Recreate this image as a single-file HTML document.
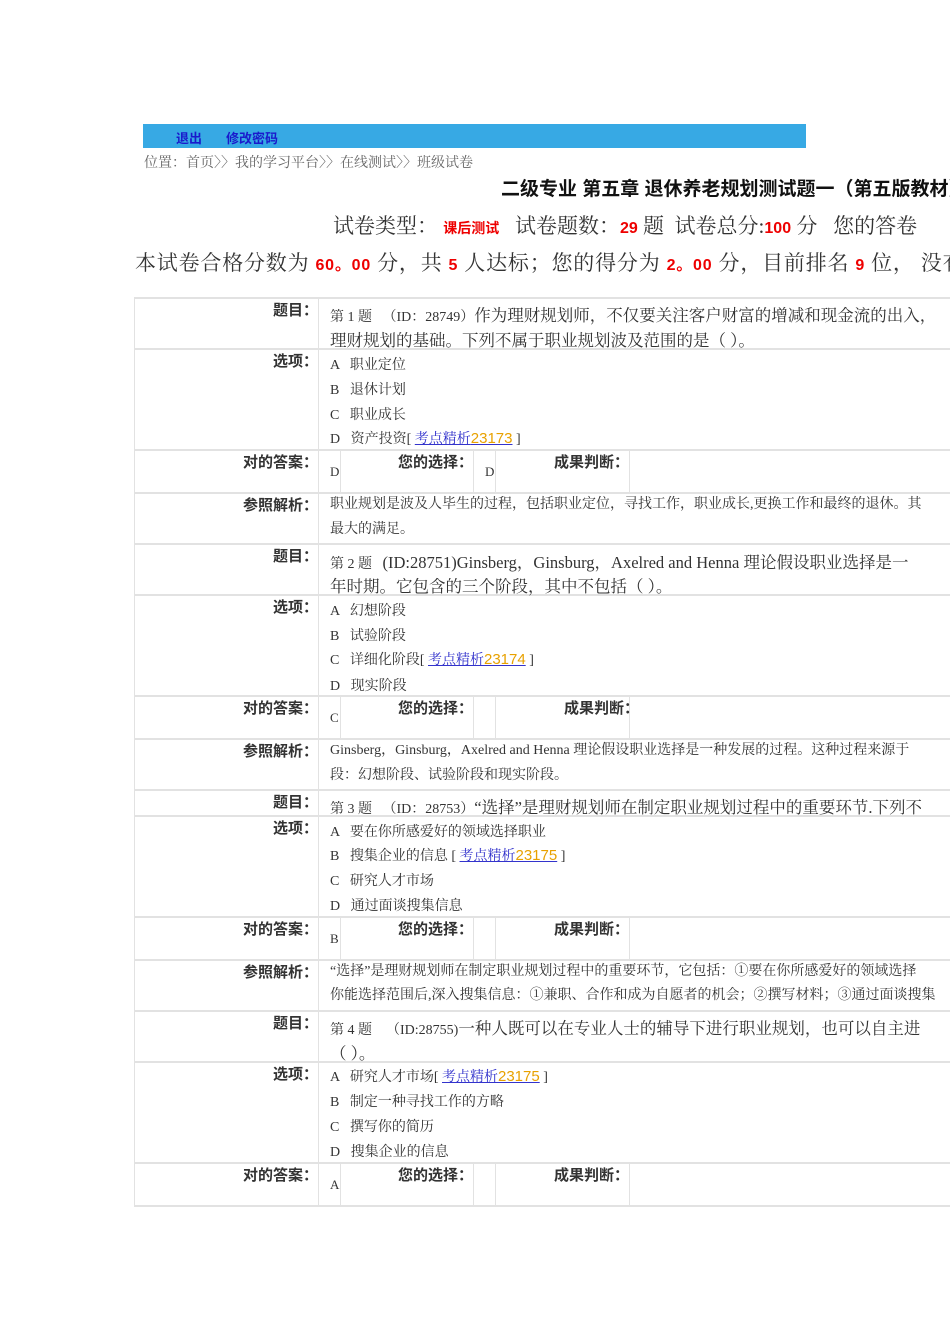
<!DOCTYPE html>
<html><head><meta charset="utf-8"><style>
*{margin:0;padding:0}
body{width:950px;height:1344px;background:#fff;position:relative;overflow:hidden;font-family:"Liberation Serif","Noto Serif CJK SC",serif;color:#222}
.a{position:absolute;white-space:nowrap}
.h{position:absolute;left:134px;width:816px;height:2px;background:#e2e2e2}
.v{position:absolute;width:1px;background:#e2e2e2}
.lb{position:absolute;right:632px;font:bold 15px "Liberation Sans","Noto Sans CJK SC",sans-serif;color:#333;white-space:nowrap}
.t{position:absolute;left:330px;font-size:14px;white-space:nowrap;color:#333;font-family:"Liberation Serif","Noto Serif CJK SC",serif}
.q{font-size:16.5px}
.e{font-size:14px}
.lk{color:#33c;text-decoration:underline}
.lk b{font-weight:normal;color:#e8a100;font-family:"Liberation Sans",sans-serif;font-size:15px}
.r{color:#e00;font-weight:bold;font-family:"Liberation Sans","Noto Sans CJK SC",sans-serif}
.s{position:absolute;font:bold 15px "Liberation Sans","Noto Sans CJK SC",sans-serif;color:#333;white-space:nowrap}
</style></head><body>
<div class="a" style="left:143px;top:124px;width:663px;height:24px;background:#37a9e4"></div>
<div class="a" style="left:176px;top:128px;font:bold 13px 'Liberation Sans','Noto Sans CJK SC',sans-serif;color:#1a1acc">退出</div>
<div class="a" style="left:226px;top:128px;font:bold 13px 'Liberation Sans','Noto Sans CJK SC',sans-serif;color:#1a1acc">修改密码</div>
<div class="a" style="left:144px;top:152px;font-size:14px;color:#666">位置：首页〉〉我的学习平台〉〉在线测试〉〉班级试卷</div>
<div class="a" style="left:501px;top:174px;font:bold 19px 'Liberation Sans','Noto Sans CJK SC',sans-serif;color:#111">二级专业 第五章 退休养老规划测试题一（第五版教材）</div>
<div class="a" style="left:333px;top:210px;font-size:21px;color:#333">试卷类型： <span class="r" style="font-size:14px">课后测试</span>&nbsp;&nbsp; 试卷题数：<span class="r" style="font-size:16px">29</span> 题 &nbsp;试卷总分:<span class="r" style="font-size:16px">100</span> 分 &nbsp; 您的答卷</div>
<div class="a" style="left:135px;top:247px;font-size:21px;color:#333;letter-spacing:0.8px">本试卷合格分数为 <span class="r" style="font-size:16px">60。00</span> 分，共 <span class="r" style="font-size:16px">5</span> 人达标；您的得分为 <span class="r" style="font-size:16px">2。00</span> 分，目前排名 <span class="r" style="font-size:16px">9</span> 位， 没有</div>

<div class="h" style="top:297px"></div><div class="h" style="top:348px"></div><div class="h" style="top:449px"></div><div class="h" style="top:492px"></div><div class="h" style="top:543px"></div><div class="h" style="top:594px"></div><div class="h" style="top:695px"></div><div class="h" style="top:738px"></div><div class="h" style="top:789px"></div><div class="h" style="top:815px"></div><div class="h" style="top:916px"></div><div class="h" style="top:959px"></div><div class="h" style="top:1010px"></div><div class="h" style="top:1061px"></div><div class="h" style="top:1162px"></div><div class="h" style="top:1205px"></div>
<div class="v" style="left:134px;top:297px;height:910px"></div>
<div class="v" style="left:318px;top:297px;height:910px"></div>
<div class="v" style="left:340px;top:450px;height:43px"></div><div class="v" style="left:473px;top:450px;height:43px"></div><div class="v" style="left:495px;top:450px;height:43px"></div><div class="v" style="left:629px;top:450px;height:43px"></div>
<div class="v" style="left:340px;top:696px;height:43px"></div><div class="v" style="left:473px;top:696px;height:43px"></div><div class="v" style="left:495px;top:696px;height:43px"></div><div class="v" style="left:629px;top:696px;height:43px"></div>
<div class="v" style="left:340px;top:917px;height:43px"></div><div class="v" style="left:473px;top:917px;height:43px"></div><div class="v" style="left:495px;top:917px;height:43px"></div><div class="v" style="left:629px;top:917px;height:43px"></div>
<div class="v" style="left:340px;top:1163px;height:43px"></div><div class="v" style="left:473px;top:1163px;height:43px"></div><div class="v" style="left:495px;top:1163px;height:43px"></div><div class="v" style="left:629px;top:1163px;height:43px"></div>

<!-- Q1 -->
<div class="lb" style="top:299px">题目：</div>
<div class="t q" style="top:302px"><span style="font-size:14px">第 1 题 &nbsp;&nbsp;（ID：28749）</span>作为理财规划师，不仅要关注客户财富的增减和现金流的出入，</div>
<div class="t q" style="top:327px">理财规划的基础。下列不属于职业规划波及范围的是（ ）。</div>
<div class="lb" style="top:350px">选项：</div>
<div class="t" style="top:354px">A &nbsp; 职业定位</div>
<div class="t" style="top:379px">B &nbsp; 退休计划</div>
<div class="t" style="top:404px">C &nbsp; 职业成长</div>
<div class="t" style="top:428px">D &nbsp; 资产投资[ <span class="lk">考点精析<b>23173</b></span> ]</div>
<div class="lb" style="top:451px">对的答案：</div>
<div class="t" style="top:464px;font-size:13px">D</div>
<div class="s" style="left:398px;top:451px">您的选择：</div>
<div class="t" style="left:485px;top:464px;font-size:13px">D</div>
<div class="s" style="left:554px;top:451px">成果判断：</div>
<div class="lb" style="top:494px">参照解析：</div>
<div class="t e" style="top:493px">职业规划是波及人毕生的过程，包括职业定位，寻找工作，职业成长,更换工作和最终的退休。其</div>
<div class="t e" style="top:518px">最大的满足。</div>

<!-- Q2 -->
<div class="lb" style="top:545px">题目：</div>
<div class="t q" style="top:549px"><span style="font-size:14px">第 2 题 &nbsp;&nbsp;</span>(ID:28751)Ginsberg，Ginsburg，Axelred and Henna 理论假设职业选择是一</div>
<div class="t q" style="top:573px">年时期。它包含的三个阶段，其中不包括（ ）。</div>
<div class="lb" style="top:596px">选项：</div>
<div class="t" style="top:600px">A &nbsp; 幻想阶段</div>
<div class="t" style="top:625px">B &nbsp; 试验阶段</div>
<div class="t" style="top:649px">C &nbsp; 详细化阶段[ <span class="lk">考点精析<b>23174</b></span> ]</div>
<div class="t" style="top:675px">D &nbsp; 现实阶段</div>
<div class="lb" style="top:697px">对的答案：</div>
<div class="t" style="top:710px;font-size:13px">C</div>
<div class="s" style="left:398px;top:697px">您的选择：</div>
<div class="s" style="left:564px;top:697px">成果判断：</div>
<div class="lb" style="top:740px">参照解析：</div>
<div class="t e" style="top:739px">Ginsberg，Ginsburg，Axelred and Henna 理论假设职业选择是一种发展的过程。这种过程来源于</div>
<div class="t e" style="top:764px">段：幻想阶段、试验阶段和现实阶段。</div>

<!-- Q3 -->
<div class="lb" style="top:791px">题目：</div>
<div class="t q" style="top:794px"><span style="font-size:14px">第 3 题 &nbsp;&nbsp;（ID：28753）</span>“选择”是理财规划师在制定职业规划过程中的重要环节.下列不</div>
<div class="lb" style="top:817px">选项：</div>
<div class="t" style="top:821px">A &nbsp; 要在你所感爱好的领域选择职业</div>
<div class="t" style="top:845px">B &nbsp; 搜集企业的信息 [ <span class="lk">考点精析<b>23175</b></span> ]</div>
<div class="t" style="top:870px">C &nbsp; 研究人才市场</div>
<div class="t" style="top:895px">D &nbsp; 通过面谈搜集信息</div>
<div class="lb" style="top:918px">对的答案：</div>
<div class="t" style="top:931px;font-size:13px">B</div>
<div class="s" style="left:398px;top:918px">您的选择：</div>
<div class="s" style="left:554px;top:918px">成果判断：</div>
<div class="lb" style="top:961px">参照解析：</div>
<div class="t e" style="top:960px">“选择”是理财规划师在制定职业规划过程中的重要环节，它包括：①要在你所感爱好的领域选择</div>
<div class="t e" style="top:984px">你能选择范围后,深入搜集信息：①兼职、合作和成为自愿者的机会；②撰写材料；③通过面谈搜集</div>

<!-- Q4 -->
<div class="lb" style="top:1012px">题目：</div>
<div class="t q" style="top:1015px"><span style="font-size:14px">第 4 题 &nbsp;&nbsp;&nbsp;（ID:28755)</span>一种人既可以在专业人士的辅导下进行职业规划，也可以自主进</div>
<div class="t q" style="top:1040px">（ ）。</div>
<div class="lb" style="top:1063px">选项：</div>
<div class="t" style="top:1066px">A &nbsp; 研究人才市场[ <span class="lk">考点精析<b>23175</b></span> ]</div>
<div class="t" style="top:1091px">B &nbsp; 制定一种寻找工作的方略</div>
<div class="t" style="top:1116px">C &nbsp; 撰写你的简历</div>
<div class="t" style="top:1141px">D &nbsp; 搜集企业的信息</div>
<div class="lb" style="top:1164px">对的答案：</div>
<div class="t" style="top:1177px;font-size:13px">A</div>
<div class="s" style="left:398px;top:1164px">您的选择：</div>
<div class="s" style="left:554px;top:1164px">成果判断：</div>
</body></html>
